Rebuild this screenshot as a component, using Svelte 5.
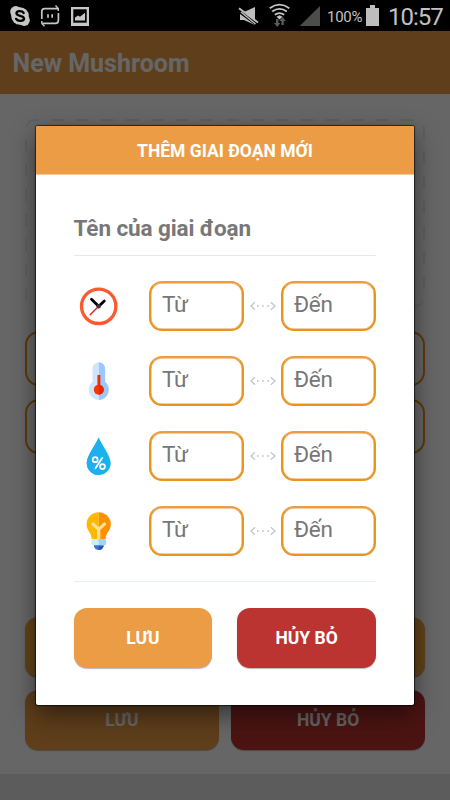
<script>
  const rows = ['clock', 'temperature', 'humidity', 'light'];
</script>

<div class="screen">
  <div class="status">
    <svg width="95" height="31" viewBox="0 0 95 31" aria-hidden="true">
      <g fill="#c6c6c6">
        <circle cx="20" cy="16" r="8.8" />
        <circle cx="15.8" cy="11.7" r="5.6" />
        <circle cx="24.2" cy="20.3" r="5.6" />
      </g>
      <path d="M23.6 12.9C22 10.4 16.5 10.6 16.5 13.3c0 3.2 7.5 1.9 7.5 5.3 0 2.9-6.2 3.1-7.9.3" fill="none" stroke="#000" stroke-width="2.4" stroke-linecap="round" />
      <g fill="none" stroke="#c6c6c6" stroke-width="1.7">
        <path d="M41.8 19v-7.5Q41.8 8.7 44.6 8.7H58M58.4 13v7.5q0 2.8-2.8 2.8H42.5" />
        <path d="M55.5 5.5 58.3 8.5V11M44.5 26.3 41.8 23.5V21" stroke-width="1.4" />
        <path d="M48 14.3v3.4M52.2 14.3v3.4" />
      </g>
      <path d="M71 7h18v19H71z" fill="#c6c6c6" />
      <path d="M73.3 9.3h13.4v13.4H73.3z" fill="#000" />
      <path d="M75 20.5v-3l3-2 2 1.3 5-4v7.7z" fill="#c6c6c6" />
    </svg>
    <div class="right">
      <svg width="84" height="31" viewBox="237 0 84 31" aria-hidden="true">
        <path d="M240 12h4l11-5v18l-11-5h-4z" fill="#bdbdbd" />
        <path d="M238 10.2 257 24.3" stroke="#000" stroke-width="3.6" />
        <path d="m239 8.2 19 14.3" stroke="#bdbdbd" stroke-width="1.9" />
        <path d="m241 12 14.5 12" stroke="#bdbdbd" stroke-width="1.5" />
        <g fill="none" stroke="#c6c6c6" stroke-width="1.8">
          <path d="M269.7 8.2q9.8-7 19.6 0M272.2 11.6q7.3-5.3 14.6 0M274.8 14.8q4.7-3.4 9.4 0" />
        </g>
        <path d="m276.5 16.8 3-1.6 3 1.6-3 2.8z" fill="#c6c6c6" />
        <path d="m277.2 27-3.2-4h2v-4h2.4v4h2zM282.6 17l-3.2 4h2v4h2.4v-4h2z" fill="#5b5b5b" />
        <path d="M299.7 26 320 6v20z" fill="#4c4c4c" />
      </svg>
      <span class="percent">100%</span>
      <svg class="battery" width="13" height="21" viewBox="0 0 13 21" aria-hidden="true"><path d="M4 0h5v3h4v18H0V3h4z" fill="#bdbdbd" /></svg>
      <span class="time">10:57</span>
    </div>
  </div>

  <div class="page">
    <header>New Mushroom</header>
    <div class="content">
      <svg class="drop" width="400" height="188" aria-hidden="true"><rect x="1" y="1" width="398" height="186" rx="9" fill="none" stroke="#e9eeee" stroke-width="2" stroke-dasharray="12.5 12.5" stroke-dashoffset="9" /></svg>
      <div class="wide-field first"></div>
      <div class="wide-field"></div>
      <div class="add"></div>
      <div class="actions back">
        <div class="btn save">LƯU</div>
        <div class="btn cancel">HỦY BỎ</div>
      </div>
    </div>
    <footer></footer>
  </div>

  <div class="overlay">
    <div class="modal">
      <div class="title">THÊM GIAI ĐOẠN MỚI</div>
      <div class="body">
        <div class="name">Tên của giai đoạn</div>
        <div class="rows">
          {#each rows as icon}
            <div class="row">
              <svg class="icon" width="50" height="50" viewBox="0 0 50 50" aria-hidden="true">
                {#if icon === 'clock'}
                  <circle cx="24.7" cy="25.3" r="17.2" fill="#fff" stroke="#fa5a2d" stroke-width="3.3" />
                  <path d="m17.5 18.2 7.2 7 5.6-5.3" fill="none" stroke="#000" stroke-width="2.8" stroke-linecap="round" />
                  <path d="m16.2 33.8 8.5-8.5" stroke="#e21b2d" stroke-width="1.4" stroke-linecap="round" />
                  <circle cx="24.7" cy="25.2" r="2.2" fill="#36383f" />
                {:else if icon === 'temperature'}
                  <path d="M24.8 6.2a6.3 6.3 0 0 0-6.3 6.3v13.2a10.4 10.4 0 0 0 6.3 18.3z" fill="#cfe5fb" />
                  <path d="M24.8 6.2a6.3 6.3 0 0 1 6.3 6.3v13.2a10.4 10.4 0 0 1-6.3 18.3z" fill="#99c8ff" />
                  <circle cx="24.8" cy="33.8" r="5" fill="#ff3105" />
                  <path d="M24.8 19v15" stroke="#ff3105" stroke-width="2.8" />
                  <path d="M24.8 29v9.8a5 5 0 0 0 0-10M24.8 19h1.4v10h-1.4z" fill="#e32a02" />
                {:else if icon === 'humidity'}
                  <path d="M24.7 6.5C21 15 12.7 24.8 12.7 32a12 12 0 0 0 24 0C36.7 24.8 28.4 15 24.7 6.5z" fill="#16b4ec" />
                  <path d="M24.7 6.5C21 15 12.7 24.8 12.7 32a12 12 0 0 0 12 12z" fill="#20aef0" />
                  <g fill="none" stroke="#fff" stroke-width="1.7">
                    <circle cx="21.2" cy="28.7" r="2.5" /><circle cx="28.5" cy="35.6" r="2.5" />
                    <path d="m28.7 26.2-7.6 11.5" />
                  </g>
                {:else}
                  <path d="M24.7 6.3A12 12 0 0 0 12.6 18.5c0 6.5 5.1 7.8 5.1 14.5h7z" fill="#ffb800" />
                  <path d="M24.7 6.3a12 12 0 0 1 12.1 12.2c0 6.5-5.1 7.8-5.1 14.5h-7z" fill="#ff9000" />
                  <path d="m18 17.2 6.7 6.2 6.7-6.2M24.7 22.5V34" fill="none" stroke="#ffe29a" stroke-width="3.2" />
                  <path d="M20 36h9.5v4.5q-1.4 3.6-4.8 3.6t-4.7-3.6z" fill="#3d73d7" />
                  <path d="M24.7 36h4.8v4.5q-1.4 3.6-4.8 3.6z" fill="#2855b8" />
                  <rect x="17.2" y="33" width="15" height="6.3" rx="2.6" fill="#cdeaff" />
                  <path d="M24.7 33h4.9a2.6 2.6 0 0 1 2.6 2.6v1.1a2.6 2.6 0 0 1-2.6 2.6h-4.9z" fill="#9cd5ff" />
                {/if}
              </svg>
              <div class="field">Từ</div>
              <svg class="arrow" width="37" height="12" viewBox="0 0 37 12" aria-hidden="true">
                <path d="m11 2.2-4 3.8 4 3.8M26.8 2.2 31 6l-4.2 3.8" fill="none" stroke="#c3c8ce" stroke-width="1.4" />
                <path d="M13 5.3h1.5v1.5H13zM18.2 5.3h1.5v1.5h-1.5zM23.4 5.3h1.5v1.5h-1.5z" fill="#b4bac1" />
              </svg>
              <div class="field">Đến</div>
            </div>
          {/each}
        </div>
        <div class="actions">
          <div class="btn save">LƯU</div>
          <div class="btn cancel">HỦY BỎ</div>
        </div>
      </div>
    </div>
  </div>
</div>

<style>
  .screen {
    position: relative;
    width: 450px;
    height: 800px;
    overflow: hidden;
    display: flex;
    flex-direction: column;
    background: #fff;
    font-family: Roboto, "Noto Sans", sans-serif;
  }
  .screen * { box-sizing: border-box; }
  svg { display: block; flex: none; }
  .status {
    height: 31px;
    flex: none;
    background: #000;
    color: #c2c2c2;
    display: flex;
    justify-content: space-between;
  }
  .right { display: flex; align-items: center; padding-right: 8px; }
  .percent { font-size: 15px; letter-spacing: -0.25px; margin-left: 6px; width: 39px; white-space: nowrap; padding-top: 2px; }
  .time { width: 54px; margin-left: 9px; font-size: 24px; line-height: 31px; letter-spacing: -1px; padding-top: 4px; white-space: nowrap; text-align: right; }
  .page { flex: 1; display: flex; flex-direction: column; }
  header {
    height: 63px;
    background: #eb9c45;
    color: #fff;
    font-size: 25px;
    font-weight: 700;
    line-height: 65px;
    padding-left: 12.5px;
  }
  .content { flex: 1; padding: 25px 25px 0; display: flex; flex-direction: column; }
  .wide-field { height: 55px; flex: none; border: 2px solid #e8901a; border-radius: 14px; margin-top: 13px; }
  .wide-field.first { margin-top: 24px; }
  .add { height: 60px; flex: none; margin-top: 163px; border-radius: 13px; background: #f5a83d; box-shadow: 0 1px 1px #999; }
  footer { height: 26px; background: #e7e7e7; }
  .overlay {
    position: absolute;
    inset: 31px 0 0;
    background: rgba(0, 0, 0, 0.6);
    padding: 95px 36px 0;
  }
  .modal {
    height: 579px;
    background: #fff;
    border-radius: 2px;
    overflow: hidden;
    box-shadow: 0 0 1px 1px rgba(0, 0, 0, 0.6), 0 9px 24px rgba(0, 0, 0, 0.5);
  }
  .title {
    height: 49px;
    background: #eb9c45;
    border-bottom: 1px solid #f4c9a4;
    color: #fff;
    text-align: center;
    font-size: 17.5px;
    font-weight: 700;
    line-height: 50px;
  }
  .body { padding: 0 38px 0 37.5px; }
  .name {
    height: 81px;
    padding-top: 39px;
    border-bottom: 1px solid #e3ecec;
    color: #777;
    font-size: 22.5px;
    letter-spacing: -0.1px;
    font-weight: 700;
    line-height: 28px;
  }
  .rows { padding-top: 25px; display: flex; flex-direction: column; gap: 25px; height: 326px; border-bottom: 1px solid #e8efef; }
  .row { display: flex; height: 50px; flex: none; align-items: center; }
  .icon { margin-right: 25.5px; }
  .field {
    width: 95px;
    height: 50px;
    border: 2px solid #e8941f;
    border-top-color: #eb9c45;
    box-shadow: inset 0 0 0 0.5px #eb9c45;
    border-radius: 13px;
    color: #777;
    font-size: 22.5px;
    letter-spacing: -0.3px;
    line-height: 43px;
    padding-left: 11px;
  }
  .actions { display: flex; gap: 25px; margin-top: 26px; }
  .actions.back { gap: 12.5px; margin-top: 13px; }
  .btn {
    flex: 1;
    height: 60px;
    border-radius: 13px;
    color: #fff;
    text-align: center;
    font-size: 17.5px;
    font-weight: 700;
    line-height: 61px;
    box-shadow: 0 1px 1px rgba(0, 0, 0, 0.28);
  }
  .save { background: #eb9c45; }
  .cancel { background: #bc3431; }
</style>
